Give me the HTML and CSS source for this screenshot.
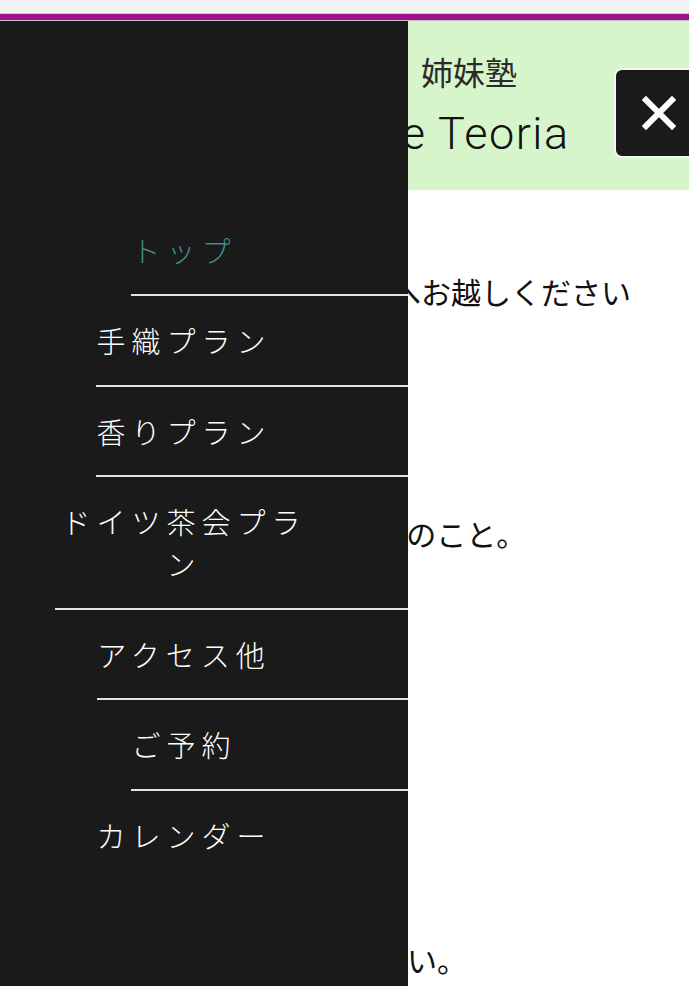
FILE: index.html
```html
<!DOCTYPE html>
<html lang="ja">
<head>
<meta charset="utf-8">
<title>姉妹塾 Le Teoria</title>
<link rel="stylesheet" href="styles.css">
</head>
<body>
<div class="chrome"></div>
<div class="accent"></div>
<header class="site-header">
  <p class="site-sub">姉妹塾</p>
  <h1 class="site-title">Le Teoria</h1>
</header>
<main class="content">
  <p class="para para-first">当日は直接二階の教室受付へお越しください</p>
  <p class="para para-second">各回の定員は3名様まで、とのこと。</p>
  <p class="para para-third">変更は2日前迄にご連絡下さい。</p>
</main>
<nav class="drawer">
  <ul class="menu">
    <li class="menu-item"><a class="menu-link is-current" href="#">トップ</a></li>
    <li class="menu-item"><a class="menu-link" href="#">手織プラン</a></li>
    <li class="menu-item"><a class="menu-link" href="#">香りプラン</a></li>
    <li class="menu-item"><a class="menu-link" href="#">ドイツ茶会プラン</a></li>
    <li class="menu-item"><a class="menu-link" href="#">アクセス他</a></li>
    <li class="menu-item"><a class="menu-link" href="#">ご予約</a></li>
    <li class="menu-item menu-item-last"><a class="menu-link" href="#">カレンダー</a></li>
  </ul>
</nav>
<button class="close-btn" type="button" aria-label="閉じる">
  <svg width="34" height="34" viewBox="0 0 34 34" aria-hidden="true">
    <path d="M4 4 L30 30 M30 4 L4 30" stroke="#fff" stroke-width="6" fill="none" stroke-linecap="square"/>
  </svg>
</button>
</body>
</html>
```

FILE: styles.css
```css
html, body {
  margin: 0;
  padding: 0;
  overflow: hidden;
}
body {
  width: 689px;
  height: 986px;
  background: #ffffff;
  font-family: "Noto Sans CJK JP", "Noto Sans", sans-serif;
  color: #111;
  position: relative;
}
.chrome {
  height: 13px;
  background: #f0f1f3;
  border-bottom: 1px solid #c9c9cc;
}
.accent {
  height: 6px;
  background: #a1108c;
  border-bottom: 1px solid #c4c4c4;
}
.site-header {
  background: #d7f5cb;
  padding: 30px 0 28px 249px;
  text-align: center;
}
.site-sub {
  margin: 0;
  font-size: 32px;
  line-height: 40px;
  color: #2a2a2a;
  font-weight: 400;
}
.site-title {
  margin: 15px 0 0;
  padding-left: 8px;
  font-family: "Roboto", "Liberation Sans", sans-serif;
  font-weight: 300;
  font-size: 45px;
  line-height: 56px;
  letter-spacing: 1.5px;
  color: #111;
}
.content {
  padding: 0 16px 0 31px;
}
.para {
  margin: 0;
  font-size: 30px;
  line-height: 48px;
  white-space: nowrap;
}
.para-first { margin-top: 77px; }
.para-second { margin-top: 194px; }
.para-third { margin-top: 378px; }

.drawer {
  position: absolute;
  top: 21px;
  left: 0;
  bottom: 0;
  width: 408px;
  background: #1a1a1a;
}
.menu {
  list-style: none;
  margin: 0;
  padding: 184.5px 0 0;
}
.menu-item {
  display: grid;
  grid-template-columns: 1fr auto 1fr 40px;
}
.menu-item::after {
  content: "";
  grid-row: 1;
  grid-column: 2 / -1;
  align-self: end;
  height: 2px;
  background: #e2e2e2;
}
.menu-item-last::after {
  display: none;
}
.menu-link {
  grid-row: 1;
  grid-column: 2;
  max-width: 258px;
  padding: 23px 0 25.5px;
  font-size: 29px;
  line-height: 42px;
  letter-spacing: 6px;
  text-align: center;
  color: #ffffff;
  text-decoration: none;
  font-weight: 300;
}
.menu-link.is-current {
  color: #3e8c8c;
}
.close-btn {
  position: absolute;
  top: 68px;
  left: 614px;
  width: 90px;
  height: 90px;
  padding: 0;
  background: #1a1a1a;
  border: 2px solid #f4f4f4;
  border-radius: 8px;
  display: flex;
  align-items: center;
  justify-content: center;
}
.close-btn svg {
  display: block;
}
```
